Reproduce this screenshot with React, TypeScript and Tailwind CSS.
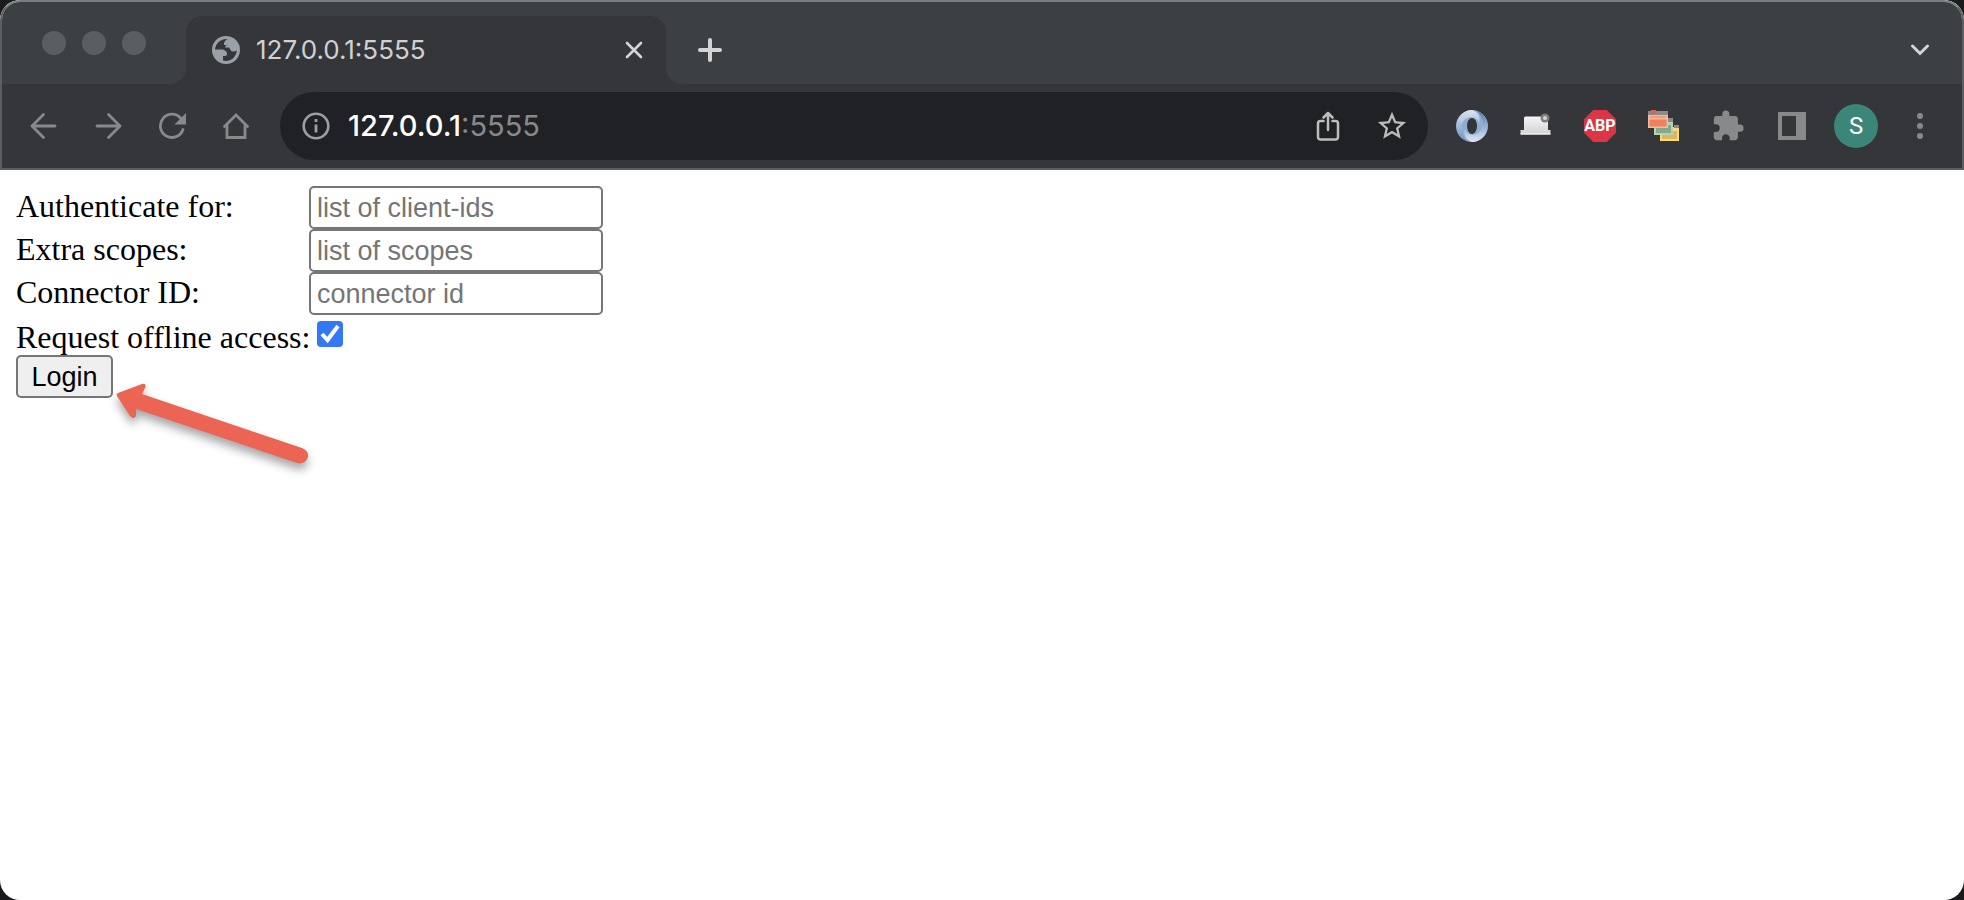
import type { ReactNode } from "react";

const IconButton = ({ label, children, className = "" }: { label: string; children: ReactNode; className?: string }) => (
  <button type="button" aria-label={label} className={`flex size-8 shrink-0 items-center justify-center ${className}`}>
    {children}
  </button>
);

const Globe = () => (
  <svg width="28" height="28" viewBox="0 0 28 28" className="shrink-0">
    <circle cx="14" cy="14" r="14" fill="#9aa0a6" />
    <path
      d="M15.500 3C9 2.600 3.500 7 3 13.500h6.500c3 0 5.500 1.700 5.500 4.500 0 1.200-.8 2-2 2h-2v4.600c7 1.800 13.500-3.600 13.800-10.200-1.500 1.200-3.300 1.300-5 .8-1.200-.4-1.800-1.200-1.800-2.400h-4.500c-1-1.800 0-3.300 1.500-3.800h-3c-.3-3 1-4.500 3.500-6z"
      fill="#35363a"
    />
    <path d="M12 11.500h5l1.500 2.500-3 1.500-3.500-2z" fill="#35363a" />
  </svg>
);

const TabStrip = () => (
  <div className="flex h-[82px] bg-[#3c4043] pt-[14px]">
    <div className="flex w-[184px] shrink-0 gap-4 pl-10 pt-[15px]">
      <span className="size-6 rounded-full bg-[#5a5e61]" />
      <span className="size-6 rounded-full bg-[#5a5e61]" />
      <span className="size-6 rounded-full bg-[#5a5e61]" />
    </div>
    <div className="relative flex w-[480px] items-center rounded-t-2xl bg-[#35363a] pl-[26px] pr-4">
      {/* Curved feet of the active tab */}
      <span className="absolute bottom-0 right-full size-4 overflow-hidden">
        <span className="block size-4 rounded-br-2xl shadow-[8px_8px_0_8px_#35363a]" />
      </span>
      <span className="absolute bottom-0 left-full size-4 overflow-hidden">
        <span className="block size-4 rounded-bl-2xl shadow-[-8px_8px_0_8px_#35363a]" />
      </span>
      <Globe />
      <span className="ml-4 flex-1 text-[26px] leading-8 text-[#d0d1d3]">127.0.0.1:5555</span>
      <IconButton label="Close tab">
        <svg width="20" height="20" viewBox="0 0 20 20" stroke="#d3d4d6" strokeWidth="2.6" strokeLinecap="round">
          <path d="M3 3l14 14M17 3L3 17" />
        </svg>
      </IconButton>
    </div>
    <div className="flex flex-1 items-center justify-between pl-7 pr-[26px]">
      <IconButton label="New tab">
        <svg width="24" height="24" viewBox="0 0 24 24" stroke="#d3d4d6" strokeWidth="4" strokeLinecap="round">
          <path d="M12 2v20M2 12h20" />
        </svg>
      </IconButton>
      <IconButton label="Search tabs">
        <svg width="20" height="14" viewBox="0 0 20 14" fill="none" stroke="#d3d4d6" strokeWidth="3" strokeLinecap="round">
          <path d="M2.500 3l7.500 7.500L17.500 3" />
        </svg>
      </IconButton>
    </div>
  </div>
);

const Toolbar = () => (
  <div className="flex h-[86px] items-center border-b-2 border-[#5d5e62] bg-[#35363a] pl-[26px] pr-[26px]">
    <div className="flex gap-8 pr-7">
      <IconButton label="Back">
        <svg width="28" height="28" viewBox="0 0 28 28" fill="none" stroke="#88898b" strokeWidth="2.800" strokeLinecap="round" strokeLinejoin="round">
          <path d="M25 14H2M13.500 2.500L2 14l11.500 11.500" />
        </svg>
      </IconButton>
      <IconButton label="Forward">
        <svg width="28" height="28" viewBox="0 0 28 28" fill="none" stroke="#88898b" strokeWidth="2.800" strokeLinecap="round" strokeLinejoin="round">
          <path d="M3 14h23M14.500 2.500L26 14 14.500 25.500" />
        </svg>
      </IconButton>
      <IconButton label="Reload">
        <svg width="28" height="28" viewBox="0 0 28 28" fill="none">
          <path d="M25 17.500A11.600 11.600 0 1 1 23 6.500" stroke="#88898b" strokeWidth="2.800" strokeLinecap="round" />
          <path d="M28 1v11.500H16.500z" fill="#88898b" />
        </svg>
      </IconButton>
      <IconButton label="Home">
        <svg width="28" height="28" viewBox="0 0 28 28" fill="none" stroke="#88898b" strokeWidth="2.800" strokeLinecap="round">
          <path d="M2.500 14.500L14 3l11.500 11.500M5 13v12.500h18V13" />
        </svg>
      </IconButton>
    </div>
    <div className="flex h-[68px] flex-1 items-center rounded-full bg-[#202124] pl-5 pr-5">
      <IconButton label="View site information">
        <svg width="28" height="28" viewBox="0 0 28 28" fill="none" stroke="#9aa0a6">
          <circle cx="14" cy="14" r="12.300" strokeWidth="2.600" />
          <path d="M14 12.500v8M14 7v3" strokeWidth="2.800" />
        </svg>
      </IconButton>
      <div className="ml-4 flex-1 text-[29px] leading-8 text-[#88898b]">
        <span className="font-medium text-white">127.0.0.1</span>:5555
      </div>
      <IconButton label="Share this page" className="mr-8">
        <svg width="24" height="30" viewBox="0 0 24 30" fill="none" stroke="#bdbdbe" strokeWidth="2.500" strokeLinecap="round" strokeLinejoin="round">
          <path d="M7.500 10H4.500a2.500 2.500 0 0 0-2.500 2.500V26a2.500 2.500 0 0 0 2.500 2.500h15A2.500 2.500 0 0 0 22 26V12.500a2.500 2.500 0 0 0-2.500-2.500h-3M12 19V2M7.500 6.500L12 2l4.500 4.500" />
        </svg>
      </IconButton>
      <IconButton label="Bookmark this page">
        <svg width="34" height="34" viewBox="0 0 24 24" fill="#bdbdbe" className="shrink-0">
          <path d="M22 9.240l-7.190-.62L12 2 9.190 8.630 2 9.240l5.460 4.730L5.820 21 12 17.270 18.180 21l-1.630-7.030L22 9.240zM12 15.400l-3.760 2.270 1-4.280-3.320-2.880 4.380-.38L12 6.100l1.710 4.040 4.380.38-3.320 2.880 1 4.280L12 15.400z" />
        </svg>
      </IconButton>
    </div>
    <div className="flex items-center gap-8 pl-7">
      <IconButton label="JSON formatter">
        <svg width="32" height="32" viewBox="0 0 32 32">
          <defs>
            <linearGradient id="swirl-a" x1="0" y1="0" x2="0" y2="1">
              <stop offset="0" stopColor="#dbe6f1" />
              <stop offset="1" stopColor="#6a90c0" />
            </linearGradient>
            <linearGradient id="swirl-b" x1="0" y1="0" x2="0" y2="1">
              <stop offset="0" stopColor="#4f79b0" />
              <stop offset="1" stopColor="#dde8f3" />
            </linearGradient>
          </defs>
          <circle cx="16" cy="16" r="16" fill="#8fadd0" />
          <path d="M16 0a16 16 0 0 0-5 31c-5-5-7-11-5-17 2-5 7-8 13-6 3 1 4 4 4 6 2-7-1-12-7-14z" fill="url(#swirl-a)" />
          <path d="M16 32a16 16 0 0 0 5-31c5 5 7 11 5 17-2 5-7 8-13 6-3-1-4-4-4-6-2 7 1 12 7 14z" fill="url(#swirl-b)" />
          <ellipse cx="16" cy="16" rx="5" ry="8" fill="#35363a" />
        </svg>
      </IconButton>
      <IconButton label="Desktop capture">
        <svg width="32" height="32" viewBox="0 0 32 32">
          <defs>
            <linearGradient id="lid" x1="0" y1="0" x2="0" y2="1">
              <stop offset="0" stopColor="#f5f5f5" />
              <stop offset="1" stopColor="#d2d2d2" />
            </linearGradient>
          </defs>
          <path d="M4 8q0-1.500 1.500-1.500h21Q28 6.500 28 8v12h2.500v4.500h-30V20H4z" fill="url(#lid)" />
          <path d="M.5 24h30" stroke="#fff" />
          <circle cx="25" cy="8" r="4.500" fill="#7d7d7d" />
          <circle cx="25" cy="8" r="2" fill="#d5d5d5" />
        </svg>
      </IconButton>
      <IconButton label="Adblock Plus">
        <span className="flex size-8 items-center justify-center bg-[#dc3545] text-[16px] leading-4 font-bold text-white [clip-path:polygon(29%_0,71%_0,100%_29%,100%_71%,71%_100%,29%_100%,0_71%,0_29%)] font-[Roboto,sans-serif]">
          ABP
        </span>
      </IconButton>
      <IconButton label="Window manager">
        <svg width="32" height="32" viewBox="0 0 32 32">
          <path d="M12 17h19v14H12z" fill="#f5dc7c" />
          <path d="M14 21h15v8H14z" fill="#e2b55d" />
          <path d="M26 15h5v3h-5z" fill="#8b8b8b" />
          <path d="M6 11h19v14H6z" fill="#b7d3b4" />
          <path d="M8 15h15v8H8z" fill="#86a887" />
          <path d="M20 8h5v4h-5z" fill="#8b8b8b" />
          <path d="M0 1h20v5H0z" fill="#8b8b8b" />
          <path d="M0 5h20v13H0z" fill="#f6b79d" />
          <path d="M2 7h16M2 10h16v6H2z" fill="#ec815f" stroke="#ec815f" />
          <path d="M3 0h5v4H3z" fill="#ee5d3b" />
        </svg>
      </IconButton>
      <IconButton label="Extensions">
        <svg width="34" height="34" viewBox="0 0 24 24" fill="#88898b" className="shrink-0">
          <path d="M20.500 11H19V7c0-1.100-.9-2-2-2h-4V3.500a2.500 2.500 0 0 0-5 0V5H4c-1.100 0-1.990.9-1.990 2v3.800H3.500c1.490 0 2.700 1.210 2.700 2.700s-1.210 2.700-2.700 2.700H2V20c0 1.100.9 2 2 2h3.800v-1.500c0-1.490 1.210-2.700 2.700-2.700s2.700 1.210 2.700 2.700V22H17c1.100 0 2-.9 2-2v-4h1.500a2.500 2.500 0 0 0 0-5z" />
        </svg>
      </IconButton>
      <IconButton label="Side panel">
        <svg width="28" height="28" viewBox="0 0 28 28">
          <path d="M0 0h28v28H0zM4 4v20h14V4z" fill="#88898b" fillRule="evenodd" />
        </svg>
      </IconButton>
      <button type="button" aria-label="Profile" className="-mx-[6px] size-11 rounded-full bg-[#3c8679] text-[24px] leading-8 text-white font-[Roboto,sans-serif]">
        S
      </button>
      <IconButton label="Menu">
        <svg width="6" height="28" viewBox="0 0 6 28" fill="#88898b">
          <circle cx="3" cy="4" r="3" />
          <circle cx="3" cy="14" r="3" />
          <circle cx="3" cy="24" r="3" />
        </svg>
      </IconButton>
    </div>
  </div>
);

const fields = [
  { id: "cross_client", label: "Authenticate for:", placeholder: "list of client-ids" },
  { id: "extra_scopes", label: "Extra scopes:", placeholder: "list of scopes" },
  { id: "connector_id", label: "Connector ID:", placeholder: "connector id" },
];

const LoginForm = () => (
  <form className="relative p-4 text-[32px] leading-10 text-black font-['Liberation_Serif',serif]" onSubmit={(e) => e.preventDefault()}>
    {fields.map((field) => (
      <div key={field.id} className="flex h-[43px]">
        <label htmlFor={field.id} className="w-[293px]">
          {field.label}
        </label>
        <input
          id={field.id}
          type="text"
          placeholder={field.placeholder}
          className="w-[294px] rounded-[5px] border-2 border-[#767676] px-[6px] text-[27px] leading-8 placeholder:text-[#757575] font-['Liberation_Sans',sans-serif]"
        />
      </div>
    ))}
    <div className="flex h-10 items-start gap-[7px]">
      <label htmlFor="offline_access" className="pt-[2px]">
        Request offline access:
      </label>
      <span className="relative mt-[6px] size-[26px]">
        <input id="offline_access" type="checkbox" defaultChecked className="peer block size-[26px] appearance-none rounded bg-[#b5b5b5] checked:bg-[#3478f6]" />
        <svg viewBox="0 0 26 26" className="pointer-events-none absolute inset-0 hidden peer-checked:block" fill="none" stroke="#fff" strokeWidth="4">
          <path d="M5 13l5.500 6L21 5" />
        </svg>
      </span>
    </div>
    <button type="submit" className="block h-[43px] w-[97px] rounded-[5px] border-2 border-[#767676] bg-[#efefef] text-[27px] leading-8 font-['Liberation_Sans',sans-serif]">
      Login
    </button>
    {/* Arrow pointing at the login button */}
    <svg width="220" height="110" viewBox="0 0 220 110" className="pointer-events-none absolute left-[108px] top-[205px] drop-shadow-[0_6px_5px_rgba(0,0,0,0.35)]">
      <path
        d="M10 18L34 9q5-1 3 4l-3 6L194 73q7 3 6 9-3 8-11 6L28 34v7q-2 4-6 0L9 21q-1-2 1-3z"
        fill="#ec6453"
      />
    </svg>
  </form>
);

export default function App() {
  return (
    <div className="min-h-screen bg-[#1b1b1e] font-[Inter,sans-serif]">
      <div className="flex min-h-screen flex-col overflow-hidden rounded-[20px] bg-white">
        <header className="rounded-t-[20px] border-x-2 border-t-2 border-x-[#5d5e62] border-t-[#7b7e80] overflow-hidden">
          <TabStrip />
          <Toolbar />
        </header>
        <main className="flex-1">
          <LoginForm />
        </main>
      </div>
    </div>
  );
}
